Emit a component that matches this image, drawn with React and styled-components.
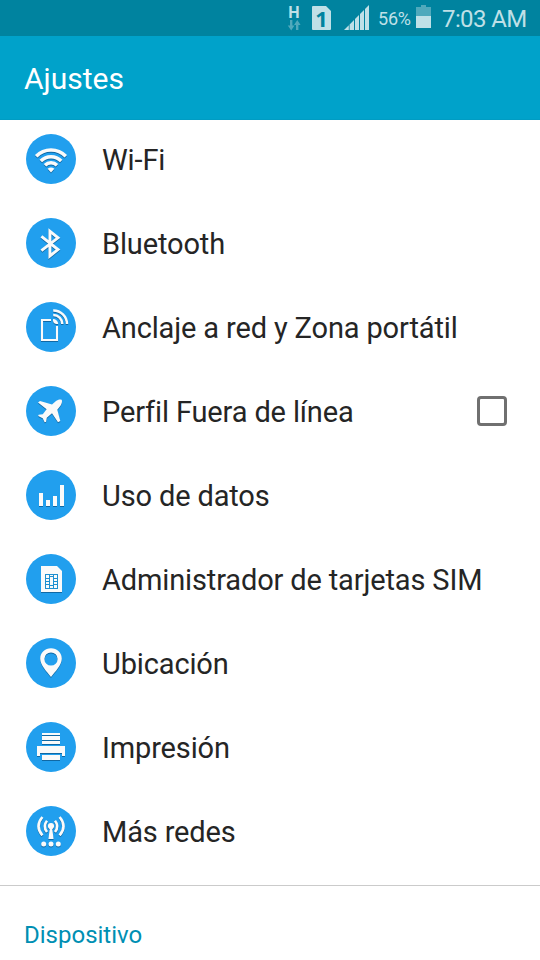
import styled, { createGlobalStyle } from "styled-components";

const GlobalStyle = createGlobalStyle`
  * {
    box-sizing: border-box;
  }

  body {
    margin: 0;
    background: #fff;
    font-family: Roboto, sans-serif;
    overflow: hidden;
  }
`;

const WifiIcon = () => (
  <>
    <g fill="none" stroke="currentColor" strokeWidth="3.5">
      <path d="M10.2 22.2A20.6 20.6 0 0 1 39.8 22.2" />
      <path d="M14.8 27A14.2 14.2 0 0 1 35.2 27" />
      <path d="M19 31.2A8.4 8.4 0 0 1 31 31.2" />
    </g>
    <path d="M21.6 34.8Q25 32.2 28.4 34.8L25 38.4Z" fill="currentColor" />
  </>
);

const BluetoothIcon = () => (
  <path
    d="M15.4 18.4L32 31.6L23.9 38V13.2L32 19.8L15.4 32.6"
    fill="none"
    stroke="currentColor"
    strokeWidth="2.9"
  />
);

const TetheringIcon = () => (
  <>
    <path
      d="M25 18H16V38H31V24"
      fill="none"
      stroke="currentColor"
      strokeWidth="2.1"
    />
    <path d="M27 17A5.2 5.2 0 0 1 32.2 22H30Q27.3 21.7 27 19Z" fill="currentColor" />
    <path
      d="M27.2 13A9 9 0 0 1 36.3 22M27.2 8.4A13.6 13.6 0 0 1 41 22"
      fill="none"
      stroke="currentColor"
      strokeWidth="2.5"
    />
  </>
);

const PlaneIcon = () => (
  <path
    d="M35.6 13.8C34.3 13 31.5 13.7 30 15L26 18.4L14 15L12 16.5L20.6 23.3L16.8 28.3L12.6 28.7L12.2 30L16.7 32.3L18.6 36.3L20 36L20.8 31.8L26 27.3L32 36.3L34.3 35L31.3 23.7L34.5 19.8C36 17.7 36.5 14.8 35.6 13.8Z"
    fill="currentColor"
  />
);

const DataIcon = () => (
  <path
    d="M13 23h4v13h-4zM20 30h4v6h-4zM27 26h4v10h-4zM34 15h4v21h-4z"
    fill="currentColor"
  />
);

const SimCardsIcon = () => (
  <>
    <path d="M15 12H31L36 17V38H15Z" fill="currentColor" />
    <path d="M19 20H32V35H19Z" fill="#1f8fd0" />
    <path
      d="M20 21h3v3h-3zM24 21h3v1h-3zM28 21h3v3h-3zM20 25h3v2h-3zM24 23h3v8h-3zM28 25h3v2h-3zM20 28h3v2h-3zM28 28h3v2h-3zM20 31h3v3h-3zM24 32h3v2h-3zM28 31h3v3h-3z"
      fill="currentColor"
    />
  </>
);

const LocationIcon = () => (
  <path
    fillRule="evenodd"
    d="M25 10.3C31 10.3 35.8 14.8 35.8 20.8C35.8 27 29 34 25 39C21 34 14.2 27 14.2 20.8C14.2 14.8 19 10.3 25 10.3ZM25 14.4A6.6 6.6 0 1 0 25 27.6A6.6 6.6 0 1 0 25 14.4Z"
    fill="currentColor"
  />
);

const PrinterIcon = () => (
  <path
    d="M16 11h18v2H16zM16 14h18v4H16zM16 19h18v3H16zM11 24h28v10h-3v-3H14v3h-3zM16 33h18v5H16z"
    fill="currentColor"
  />
);

const NetworksIcon = () => (
  <>
    <g fill="currentColor">
      <circle cx="25" cy="20" r="3.1" />
      <path d="M24 21H26L27.6 33H22.4Z" />
      <circle cx="17.7" cy="38" r="2.5" />
      <circle cx="25" cy="38" r="2.5" />
      <circle cx="32.3" cy="38" r="2.5" />
    </g>
    <g fill="none" stroke="currentColor" strokeWidth="2.6">
      <path d="M21 14.8Q16.6 20.3 21 26M29 14.8Q33.4 20.3 29 26" />
      <path d="M16.4 11Q8.6 20.3 16.4 29.4M33.6 11Q41.4 20.3 33.6 29.4" />
    </g>
  </>
);

const settings = [
  { label: "Wi-Fi", Icon: WifiIcon },
  { label: "Bluetooth", Icon: BluetoothIcon },
  { label: "Anclaje a red y Zona portátil", Icon: TetheringIcon },
  { label: "Perfil Fuera de línea", Icon: PlaneIcon, checkbox: true },
  { label: "Uso de datos", Icon: DataIcon },
  { label: "Administrador de tarjetas SIM", Icon: SimCardsIcon },
  { label: "Ubicación", Icon: LocationIcon },
  { label: "Impresión", Icon: PrinterIcon },
  { label: "Más redes", Icon: NetworksIcon },
];

export default function App() {
  return (
    <Screen>
      <GlobalStyle />
      <StatusBar>
        <Network>
          <span>H</span>
          <svg width="14" height="11" viewBox="0 0 14 11">
            <path
              d="M3 0h2.4v5.5H7.5L4.2 10.4L.8 5.5H3zM9 10V5H7L10.3 0L13.6 5H11.4V10z"
              fill="#4fa9bc"
            />
          </svg>
        </Network>
        <SimSlot>
          <svg width="19" height="24" viewBox="0 0 19 24">
            <path d="M1 0H14L19 5V23Q19 24 18 24H1Q0 24 0 23V1Q0 0 1 0Z" fill="#bfe0e7" />
          </svg>
          <b>1</b>
        </SimSlot>
        <Signal width="26" height="26" viewBox="0 0 26 26">
          <path
            d="M0 25L4.8 20.2V25zM5.6 19.4L10 15V25H5.6zM11 14L15 10V25H11zM16 9L20 5V25H16zM21 4L25 0V25H21z"
            fill="#bfe0e7"
          />
        </Signal>
        <Percent>56%</Percent>
        <svg width="15" height="23" viewBox="0 0 15 23">
          <path d="M5 0H10V2H15V11H0V2H5Z" fill="#4fa9bc" />
          <path d="M0 11H15V23H0Z" fill="#bfe0e7" />
        </svg>
        <Clock>7:03 AM</Clock>
      </StatusBar>
      <Header>Ajustes</Header>
      <List>
        {settings.map(({ label, Icon, checkbox }) => (
          <Row key={label}>
            <Disc>
              <svg width="50" height="50" viewBox="0 0 50 50">
                <Icon />
              </svg>
            </Disc>
            <Label>{label}</Label>
            {checkbox && <Checkbox />}
          </Row>
        ))}
      </List>
      <SectionTitle>Dispositivo</SectionTitle>
    </Screen>
  );
}

const Screen = styled.div`
  width: 540px;
  height: 960px;
  display: flex;
  flex-direction: column;
  background: #fff;
  overflow: hidden;
`;

const StatusBar = styled.div`
  flex: none;
  height: 36px;
  display: flex;
  align-items: flex-start;
  justify-content: flex-end;
  padding: 5px 13px 0 0;
  background: #00839f;
  color: #bfe0e7;
`;

const Network = styled.div`
  width: 14px;
  display: flex;
  flex-direction: column;
  align-items: center;
  margin-right: 11px;

  span {
    font-size: 16px;
    font-weight: 700;
    line-height: 15px;
  }
`;

const SimSlot = styled.div`
  display: grid;
  place-items: center;
  margin: 1px 13px 0 0;

  svg,
  b {
    grid-area: 1 / 1;
  }

  b {
    color: #00839f;
    font-family: "Noto Sans", sans-serif;
    font-size: 22px;
    line-height: 24px;
  }
`;

const Signal = styled.svg`
  margin-right: 8px;
`;

const Percent = styled.div`
  width: 38px;
  font-size: 18px;
  line-height: 28px;
  letter-spacing: -0.2px;
  white-space: nowrap;
`;

const Clock = styled.div`
  width: 85px;
  margin-left: 11px;
  font-size: 24px;
  line-height: 28px;
  letter-spacing: -0.6px;
  white-space: nowrap;
`;

const Header = styled.header`
  flex: none;
  height: 84px;
  display: flex;
  align-items: center;
  padding: 2px 24px 0;
  background: #00a2ca;
  border-bottom: 1px solid #009cc3;
  color: #fff;
  font-size: 30px;
`;

const List = styled.div`
  flex: none;
  height: 766px;
  display: flex;
  flex-direction: column;
  justify-content: flex-end;
  padding-bottom: 12px;
  border-bottom: 1px solid #cbcbcb;
`;

const Row = styled.div`
  flex: none;
  height: 84px;
  display: flex;
  align-items: center;
  padding: 0 33px 0 26px;
`;

const Disc = styled.div`
  width: 50px;
  height: 50px;
  border-radius: 50%;
  background: #219fee;
  color: #fafafa;

  svg {
    display: block;
    filter: drop-shadow(0 1px 0.4px rgba(0, 50, 90, 0.5));
  }
`;

const Label = styled.div`
  flex: 1;
  margin-left: 26px;
  padding-top: 2px;
  color: #252525;
  font-size: 29px;
  letter-spacing: -0.14px;
  white-space: nowrap;
`;

const Checkbox = styled.div`
  width: 30px;
  height: 30px;
  border: 3px solid #707070;
  border-radius: 4px;
`;

const SectionTitle = styled.div`
  padding: 35px 24px 0;
  color: #008fb3;
  font-size: 24px;
  line-height: 28px;
`;
